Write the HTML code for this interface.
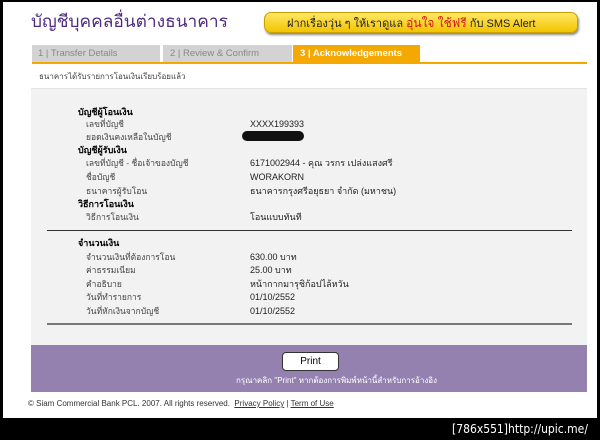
<!DOCTYPE html>
<html><head><meta charset="utf-8"><style>
*{margin:0;padding:0;box-sizing:border-box}
body{width:600px;height:440px;background:#000;position:relative;overflow:hidden;font-family:"Liberation Sans","Noto Sans CJK SC",sans-serif;}
.page{position:absolute;left:3px;top:2px;width:594px;height:416px;background:#fff}
.abs{position:absolute;white-space:nowrap;line-height:12px}
.t{font-size:8.5px;color:#444}
.h{font-size:9px;font-weight:bold;color:#000}
.v{font-size:9px;color:#222}
</style></head><body>
<div class="page"></div>
<div class="abs" style="left:31px;top:10px;font-size:17px;line-height:24px;color:#4f2a80;transform:scaleX(1.02);transform-origin:left">บัญชีบุคคลอื่นต่างธนาคาร</div>
<div class="abs" style="left:264px;top:12px;width:314px;height:21px;background:linear-gradient(#ffe766,#f3c400);border-radius:7px;box-shadow:1px 2px 2px #888;border:1px solid #c9a000"></div>
<div class="abs" style="left:287px;top:16px;font-size:11px;line-height:14px;color:#222">ฝากเรื่องวุ่น ๆ ให้เราดูแล <span style="color:#d0181a;font-size:12px">อุ่นใจ ใช้ฟรี</span> กับ SMS Alert</div>
<div class="abs" style="left:32px;top:45px;width:128px;height:18px;background:#d3d3d3"></div>
<div class="abs" style="left:163px;top:45px;width:129px;height:18px;background:#d3d3d3"></div>
<div class="abs" style="left:293px;top:45px;width:127px;height:18px;background:#f5a800"></div>
<div class="abs" style="left:32px;top:62px;width:555px;height:2px;background:#f5a800"></div>
<div class="abs" style="left:38px;top:48px;font-size:9.5px;color:#888">1 | Transfer Details</div>
<div class="abs" style="left:170px;top:48px;font-size:9.5px;color:#888">2 | Review &amp; Confirm</div>
<div class="abs" style="left:300px;top:48px;font-size:9.5px;color:#fff;font-weight:bold">3 | Acknowledgements</div>
<div class="abs t" style="left:39px;top:71px;font-size:8px">ธนาคารได้รับรายการโอนเงินเรียบร้อยแล้ว</div>
<div class="abs" style="left:31px;top:88px;width:556px;height:1px;background:#e4e4e4"></div>
<div class="abs" style="left:31px;top:89px;width:556px;height:256px;background:#f2f2f2"></div>
<div class="abs h" style="left:78px;top:106px">บัญชีผู้โอนเงิน</div>
<div class="abs t" style="left:86px;top:118px">เลขที่บัญชี</div><div class="abs v" style="left:250px;top:118px">XXXX199393</div>
<div class="abs t" style="left:86px;top:131px">ยอดเงินคงเหลือในบัญชี</div>
<div class="abs" style="left:242px;top:131px;width:62px;height:10px;background:#111;border-radius:5px"></div>
<div class="abs h" style="left:78px;top:144px">บัญชีผู้รับเงิน</div>
<div class="abs t" style="left:86px;top:157px">เลขที่บัญชี - ชื่อเจ้าของบัญชี</div><div class="abs v" style="left:250px;top:157px">6171002944 - คุณ วรกร เปล่งแสงศรี</div>
<div class="abs t" style="left:86px;top:171px">ชื่อบัญชี</div><div class="abs v" style="left:250px;top:171px">WORAKORN</div>
<div class="abs t" style="left:86px;top:185px">ธนาคารผู้รับโอน</div><div class="abs v" style="left:250px;top:185px">ธนาคารกรุงศรีอยุธยา จำกัด (มหาชน)</div>
<div class="abs h" style="left:78px;top:198px">วิธีการโอนเงิน</div>
<div class="abs t" style="left:86px;top:211px">วิธีการโอนเงิน</div><div class="abs v" style="left:250px;top:211px">โอนแบบทันที</div>
<div class="abs" style="left:47px;top:230px;width:525px;height:1px;background:#333"></div>
<div class="abs h" style="left:78px;top:237px">จำนวนเงิน</div>
<div class="abs t" style="left:86px;top:251px">จำนวนเงินที่ต้องการโอน</div><div class="abs v" style="left:250px;top:251px">630.00 บาท</div>
<div class="abs t" style="left:86px;top:264px">ค่าธรรมเนียม</div><div class="abs v" style="left:250px;top:264px">25.00 บาท</div>
<div class="abs t" style="left:86px;top:278px">คำอธิบาย</div><div class="abs v" style="left:250px;top:278px">หน้ากากมารุชิก้อปไล้หวัน</div>
<div class="abs t" style="left:86px;top:291px">วันที่ทำรายการ</div><div class="abs v" style="left:250px;top:291px">01/10/2552</div>
<div class="abs t" style="left:86px;top:305px">วันที่หักเงินจากบัญชี</div><div class="abs v" style="left:250px;top:305px">01/10/2552</div>
<div class="abs" style="left:47px;top:323px;width:525px;height:2px;background:#777"></div>
<div class="abs" style="left:31px;top:345px;width:556px;height:47px;background:#9581b0"></div>
<div class="abs" style="left:282px;top:352px;width:57px;height:19px;background:#fff;border:1px solid #333;border-radius:4px;font-size:10px;text-align:center;line-height:17px">Print</div>
<div class="abs" style="left:236px;top:375px;font-size:8px;color:#fff">กรุณาคลิก "Print" หากต้องการพิมพ์หน้านี้สำหรับการอ้างอิง</div>
<div class="abs" style="left:28px;top:398px;font-size:8px;color:#333">© Siam Commercial Bank PCL. 2007. All rights reserved. &nbsp;<span style="text-decoration:underline">Privacy Policy</span> | <span style="text-decoration:underline">Term of Use</span></div>
<div class="abs" style="left:452px;top:422px;font-size:12px;line-height:14px;color:#fff;font-family:'DejaVu Sans Condensed','DejaVu Sans',sans-serif">[786x551]http://upic.me/</div>
</body></html>
